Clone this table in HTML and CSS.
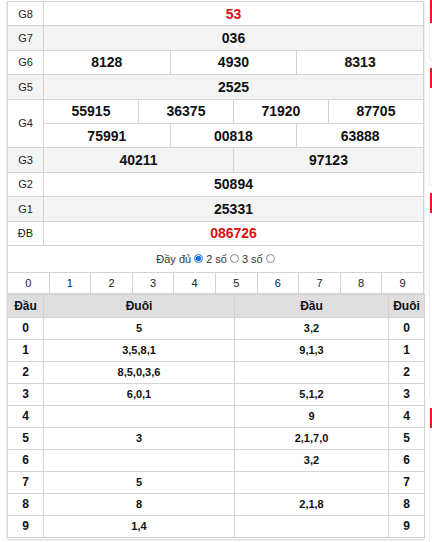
FILE: index.html
```html
<!DOCTYPE html>
<html lang="vi">
<head>
<meta charset="utf-8">
<link rel="stylesheet" href="styles.css">
</head>
<body>
<div class="page">
  <div class="main">
    <table class="kq">
      <colgroup><col class="c-g"><col span="12"></colgroup>
      <tr><td class="g">G8</td><td colspan="12" class="n red">53</td></tr>
      <tr class="alt"><td class="g">G7</td><td colspan="12" class="n">036</td></tr>
      <tr><td class="g">G6</td><td colspan="4" class="n">8128</td><td colspan="4" class="n">4930</td><td colspan="4" class="n">8313</td></tr>
      <tr class="alt"><td class="g">G5</td><td colspan="12" class="n">2525</td></tr>
      <tr><td class="g" rowspan="2">G4</td><td colspan="3" class="n">55915</td><td colspan="3" class="n">36375</td><td colspan="3" class="n">71920</td><td colspan="3" class="n">87705</td></tr>
      <tr><td colspan="4" class="n">75991</td><td colspan="4" class="n">00818</td><td colspan="4" class="n">63888</td></tr>
      <tr class="alt"><td class="g">G3</td><td colspan="6" class="n">40211</td><td colspan="6" class="n">97123</td></tr>
      <tr><td class="g">G2</td><td colspan="12" class="n">50894</td></tr>
      <tr class="alt"><td class="g">G1</td><td colspan="12" class="n">25331</td></tr>
      <tr><td class="g">ĐB</td><td colspan="12" class="n red">086726</td></tr>
    </table>
    <div class="opts">
      <span>Đầy đủ</span><span class="radio on"></span><span>2 số</span><span class="radio"></span><span>3 số</span><span class="radio"></span>
    </div>
    <table class="digits">
      <tr><td>0</td><td>1</td><td>2</td><td>3</td><td>4</td><td>5</td><td>6</td><td>7</td><td>8</td><td>9</td></tr>
    </table>
    <table class="loto">
      <colgroup><col class="l1"><col class="l2"><col class="l3"><col class="l4"></colgroup>
      <tr class="head"><th>Đầu</th><th>Đuôi</th><th>Đầu</th><th>Đuôi</th></tr>
      <tr><td>0</td><td>5</td><td>3,2</td><td>0</td></tr>
      <tr><td>1</td><td>3,5,8,1</td><td>9,1,3</td><td>1</td></tr>
      <tr><td>2</td><td>8,5,0,3,6</td><td></td><td>2</td></tr>
      <tr><td>3</td><td>6,0,1</td><td>5,1,2</td><td>3</td></tr>
      <tr><td>4</td><td></td><td>9</td><td>4</td></tr>
      <tr><td>5</td><td>3</td><td>2,1,7,0</td><td>5</td></tr>
      <tr><td>6</td><td></td><td>3,2</td><td>6</td></tr>
      <tr><td>7</td><td>5</td><td></td><td>7</td></tr>
      <tr><td>8</td><td>8</td><td>2,1,8</td><td>8</td></tr>
      <tr><td>9</td><td>1,4</td><td></td><td>9</td></tr>
    </table>
  </div>
  <div class="side">
    <div class="card c1"><div class="bar"></div></div>
    <div class="card c2"><div class="bar"></div></div>
    <div class="card c3"><div class="bar"></div></div>
    <div class="card c4"><div class="bar"></div></div>
  </div>
</div>
</body>
</html>
```
FILE: styles.css
```css
html, body {
  margin: 0;
  padding: 0;
  background: #fff;
  font-family: "Liberation Sans", Arial, sans-serif;
  color: #111;
}
.page {
  display: flex;
  align-items: flex-start;
  padding-left: 7px;
  gap: 6px;
  overflow: hidden;
  height: 542px;
}
.main {
  width: 417px;
  flex: none;
  box-shadow: 0 1px 2px rgba(0,0,0,0.18);
  padding-bottom: 1px;
}
table {
  border-collapse: collapse;
  width: 417px;
  table-layout: fixed;
}
td, th {
  border: 1px solid #d3d3d3;
  padding: 0;
  text-align: center;
}
.kq { margin-top: 1px; }
.kq .c-g { width: 36px; }
.kq td { height: 23.4px; }
.kq tr.alt td { background: #f3f3f3; }
.kq td.g {
  font-size: 11px;
  color: #222;
}
.kq td.n {
  font-size: 14px;
  font-weight: bold;
  color: #111;
}
.kq td.red { color: #e00d0d; }
.opts {
  height: 26px;
  display: flex;
  align-items: center;
  justify-content: center;
  gap: 3px;
  font-size: 11px;
  color: #333;
  border-left: 1px solid #d3d3d3;
  border-right: 1px solid #d3d3d3;
}
.radio {
  width: 7px;
  height: 7px;
  border: 1px solid #888;
  border-radius: 50%;
  display: inline-block;
  box-sizing: content-box;
}
.radio.on {
  border-color: #1a73e8;
  background: radial-gradient(circle, #1a73e8 0 2.5px, #fff 3px);
}
.digits td {
  height: 20px;
  font-size: 11px;
  color: #222;
}
.loto .l1 { width: 36px; }
.loto .l2 { width: 191px; }
.loto .l3 { width: 154px; }
.loto .l4 { width: 36px; }
.loto th {
  background: #dedede;
  height: 22px;
  font-size: 12px;
  font-weight: bold;
  color: #111;
}
.loto td {
  height: 21px;
  font-size: 11px;
  font-weight: bold;
  color: #111;
}
.loto td:first-child, .loto td:last-child { font-size: 12px; }
.side {
  flex: 1;
  display: flex;
  flex-direction: column;
  gap: 8px;
}
.card {
  width: 200px;
  background: #fff;
  box-shadow: 0 0 2px rgba(0,0,0,0.25);
  border-radius: 3px;
}
.bar {
  height: 20px;
  background: #e41e26;
}
.c1 { height: 60px; }
.c1 .bar { height: 23px; }
.c2 { height: 117px; }
.c3 { height: 205px; }
.c4 { height: 200px; margin-top: 2px; }
```
